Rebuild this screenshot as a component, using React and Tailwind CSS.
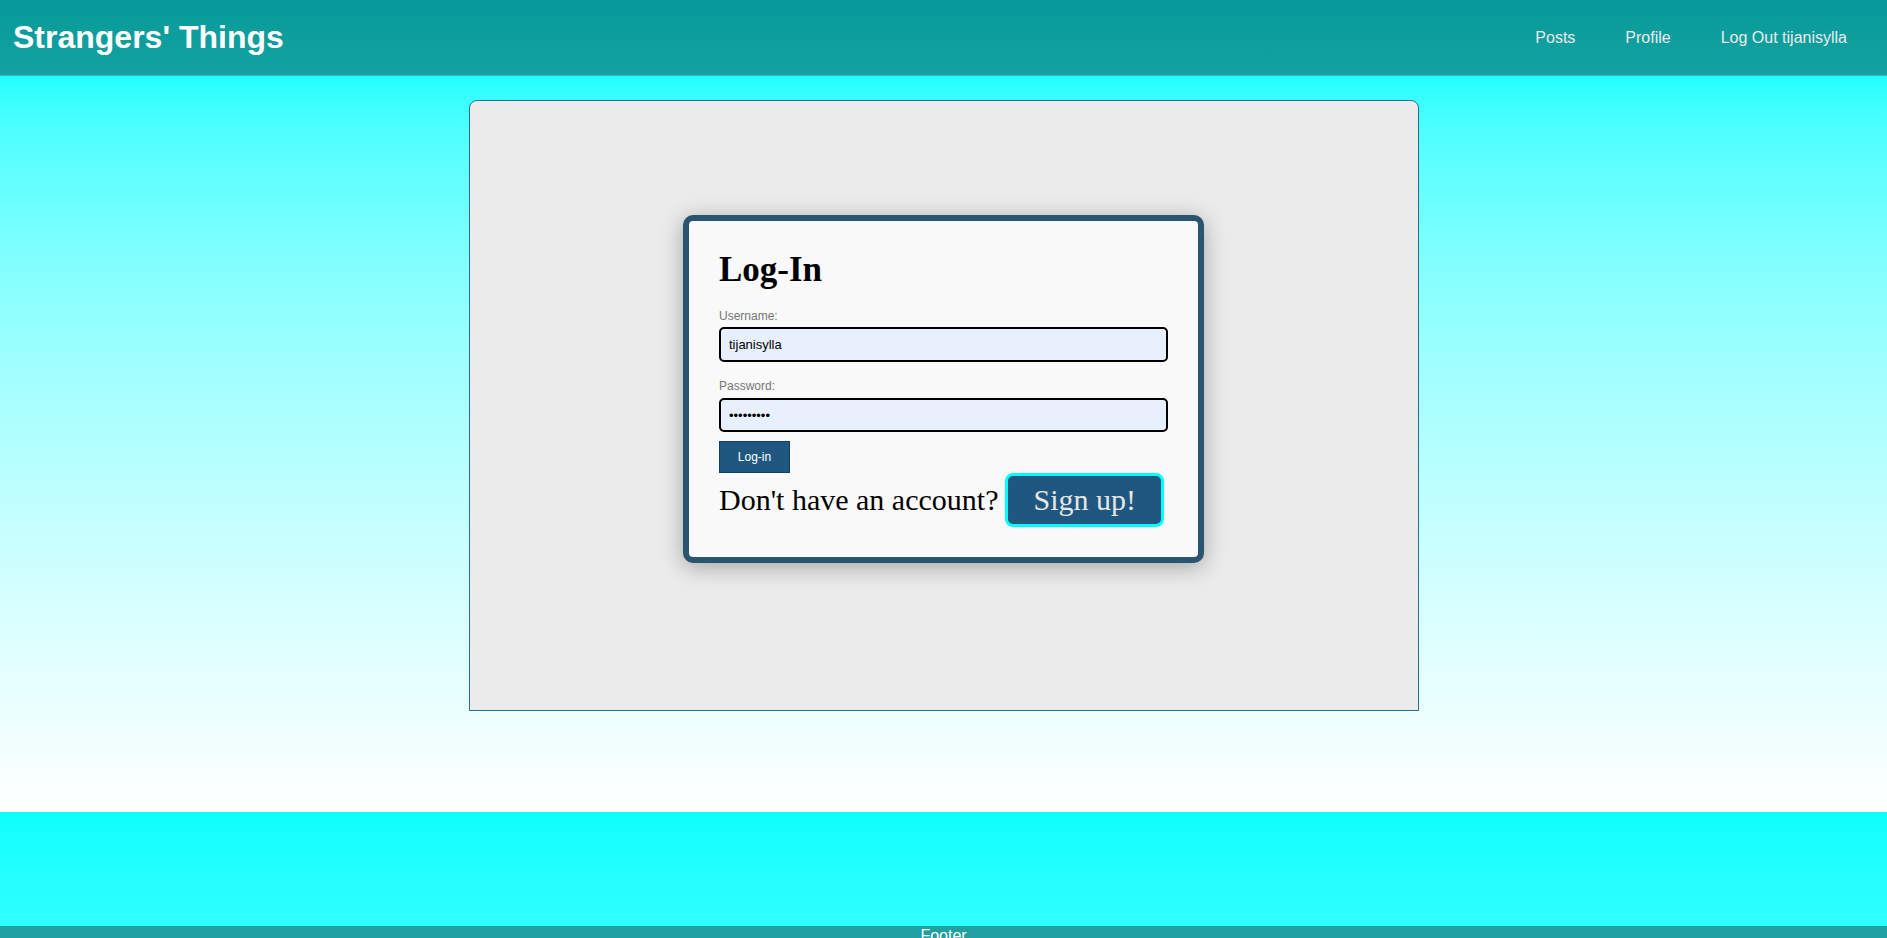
import React from 'react';

const sans = "font-['Liberation_Sans',Arial,sans-serif]";
const serif = "font-['Liberation_Serif','Times_New_Roman',serif]";

function Header() {
  return (
    <header className={`h-[76px] flex items-start justify-between px-[13px] bg-linear-to-b from-[#069999] to-[#14a2a2] border-b border-[#3cb8b8] ${sans}`}>
      <h1 className="mt-[19px] text-[32px] leading-[37px] font-bold text-white">
        Strangers' Things
      </h1>
      <nav className="mt-[29px] flex gap-[50px] pr-[27px] text-[16px] leading-[18px] text-[#ececec]">
        <a href="#">Posts</a>
        <a href="#">Profile</a>
        <a href="#">Log Out tijanisylla</a>
      </nav>
    </header>
  );
}

function LoginCard() {
  return (
    <div className="w-[521px] bg-[#f9f9f9] border-[6px] border-[#2b5470] rounded-[10px] px-[30px] pt-[29px] pb-[30px] shadow-[0_4px_22px_rgba(0,0,0,0.3)]">
      <h2 className={`${serif} text-[35px] leading-[40px] font-bold text-black mb-[19px]`}>
        Log-In
      </h2>
      <form className={sans} onSubmit={(e) => e.preventDefault()}>
        <label className="block text-[12px] leading-[14px] text-[#767676] mb-[4px]">
          Username:
        </label>
        <input
          type="text"
          defaultValue="tijanisylla"
          className="block w-full h-[35px] border-2 border-black rounded-[5px] bg-[#e8f0fe] px-[8px] text-[13px] text-black outline-none mb-[17px]"
        />
        <label className="block text-[12px] leading-[14px] text-[#767676] mb-[5px]">
          Password:
        </label>
        <input
          type="password"
          defaultValue="tijanisy1"
          className="block w-full h-[34px] border-2 border-black rounded-[5px] bg-[#e8f0fe] px-[8px] text-[13px] text-black outline-none mb-[9px]"
        />
        <button
          type="submit"
          className="block w-[71px] h-[32px] bg-[#1f5780] border border-[#163f5c] text-white text-[12px]"
        >
          Log-in
        </button>
      </form>
      <div className={`${serif} flex items-baseline gap-[7px] text-[30px] text-black`}>
        <span>Don't have an account?</span>
        <button className="bg-[#1f5780] border-[3px] border-[#00ffff] rounded-[8px] px-[25px] py-[7px] text-[30px] leading-[34px] text-[#e6e6e6]">
          Sign up!
        </button>
      </div>
    </div>
  );
}

export default function App() {
  return (
    <div className="min-h-screen">
      <Header />
      <main className="h-[736px] bg-linear-to-b from-[#22ffff] to-[#ffffff] pt-[24px]">
        <div className="w-[950px] h-[611px] mx-auto bg-[#ebebeb] border border-[#2a6c8c] rounded-t-[8px] flex justify-center items-start pt-[114px]">
          <LoginCard />
        </div>
      </main>
      <section className="h-[114px] bg-linear-to-b from-[#0cffff] to-[#2effff]" />
      <footer className={`h-[24px] bg-[#20a0a0] text-center text-white text-[16px] leading-[16px] pt-[2px] ${sans}`}>
        Footer
      </footer>
    </div>
  );
}
